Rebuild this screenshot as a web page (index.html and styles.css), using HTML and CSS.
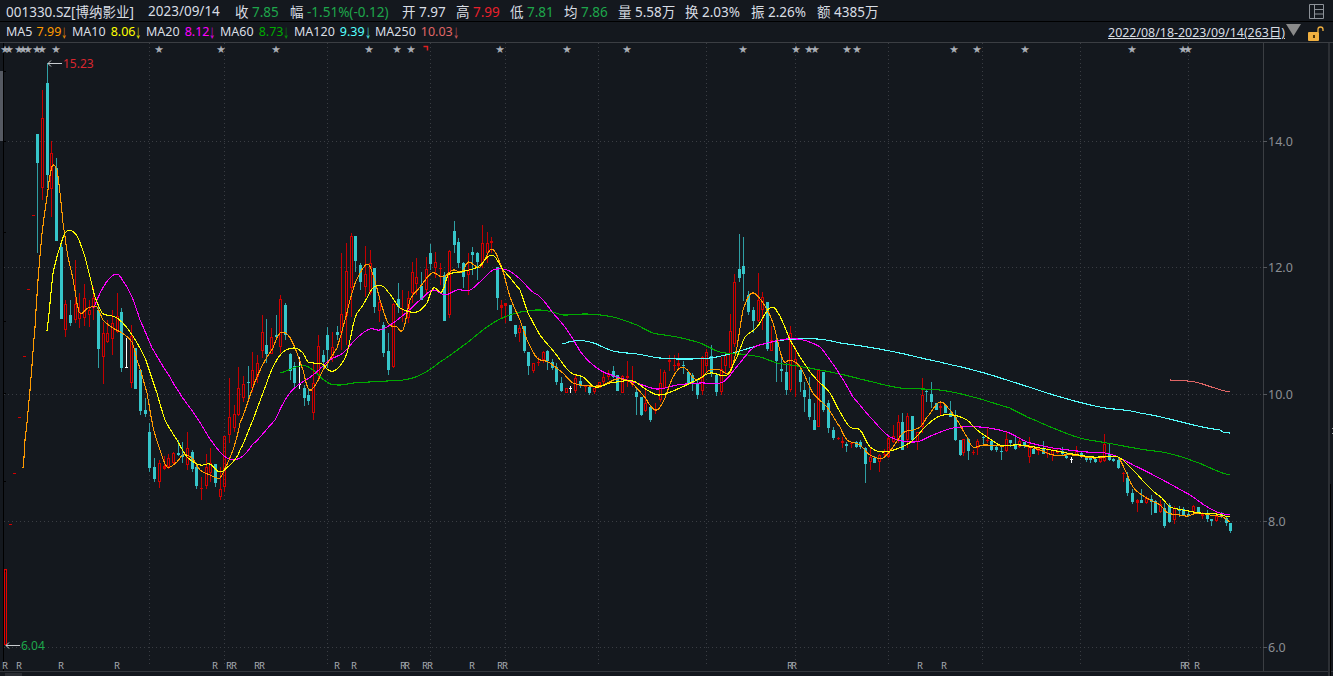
FILE: index.html
```html
<!DOCTYPE html>
<html lang="zh">
<head>
<meta charset="utf-8">
<title>001330.SZ</title>
<link rel="stylesheet" href="styles.css">
</head>
<body>
<div class="app">
  <header class="quote">
    <span class="name">001330.SZ[博纳影业]</span>
    <span class="date">2023/09/14</span>
    <span class="q q1">收 <b class="dn">7.85</b></span>
    <span class="q q2">幅 <b class="dn">-1.51%(-0.12)</b></span>
    <span class="q q3">开 <b>7.97</b></span>
    <span class="q q3">高 <b class="up">7.99</b></span>
    <span class="q q3">低 <b class="dn">7.81</b></span>
    <span class="q q3">均 <b class="dn">7.86</b></span>
    <span class="q q4">量 <b>5.58万</b></span>
    <span class="q q5">换 <b>2.03%</b></span>
    <span class="q q5">振 <b>2.26%</b></span>
    <span class="q">额 <b>4385万</b></span>
    <svg class="layout-icon" width="15" height="15" viewBox="0 0 15 15"><path d="M.5.5h14v14H.5zM5.500.5v14M5.500 5.500h9M5.500 10h9" fill="none" stroke="#8d9299"/></svg>
  </header>
  <div class="ma-row">
    <span class="ma m5">MA5<b>7.99<i>↓</i></b></span>
    <span class="ma m10">MA10<b>8.06<i>↓</i></b></span>
    <span class="ma m20">MA20<b>8.12<i>↓</i></b></span>
    <span class="ma m60">MA60<b>8.73<i>↓</i></b></span>
    <span class="ma m120">MA120<b>9.39<i>↓</i></b></span>
    <span class="ma m250">MA250<b>10.03<i>↓</i></b></span>
    <span class="range">2022/08/18-2023/09/14(263日)</span>
    <svg class="tri" width="15" height="12" viewBox="0 0 15 12"><path d="M0 0h15L7.500 12z" fill="#8a8a8a"/></svg>
    <svg class="lock" width="16" height="15" viewBox="0 0 16 15"><path d="M10 6V3.500a2.500 2.500 0 0 1 5 0V5" fill="none" stroke="#f0b040" stroke-width="1.300"/><rect x="0" y="6" width="11" height="9" rx="1" fill="#f0b040"/><rect x="5" y="9" width="2" height="3" fill="#4a3208"/></svg>
  </div>
  <main class="chart-wrap">
    <svg id="chart" class="chart" width="1333" height="633" viewBox="0 43 1333 633"></svg>
  </main>
</div>
<script src="chart.js"></script>
</body>
</html>
```
FILE: styles.css
```css
* { box-sizing: border-box; }
html, body { margin: 0; height: 100%; background: #14181e; overflow: hidden; }
body { font-family: "Noto Sans", "Noto Sans CJK SC", sans-serif; color: #d9dee4; }
.app { width: 1333px; height: 676px; display: flex; flex-direction: column; }
b { font-weight: 400; }
i { font-style: normal; }

.quote {
  height: 22px;
  flex: none;
  display: flex;
  align-items: center;
  padding: 0 9px 0 6px;
  font-size: 13.5px;
  white-space: nowrap;
  border-bottom: 1px solid #000;
}
.name { width: 142px; }
.date { width: 87px; }
.q { width: 54px; }
.q1 { width: 55px; }
.q2 { width: 112px; }
.q4 { width: 67px; }
.q5 { width: 66px; }
.up { color: #e8202c; }
.dn { color: #1ea64b; }
.layout-icon { margin-left: auto; margin-top: 1px; }

.ma-row {
  height: 21px;
  flex: none;
  display: flex;
  align-items: center;
  padding: 0 9px 0 6px;
  font-size: 12.5px;
  white-space: nowrap;
  border-bottom: 1px solid #3b3e43;
}
.ma { display: flex; gap: 5px; }
.ma b { display: flex; }
.ma i { display: block; width: 12.5px; margin-right: -6px; transform: scaleX(.5); transform-origin: left center; }
.m5 { width: 66px; gap: 4px; }
.m10, .m20, .m60 { width: 74px; }
.m120 { width: 81px; }
.m250 { width: 90px; }
.m5 b { color: #ff9a00; }
.m10 b { color: #ffff00; }
.m20 b { color: #ff00ff; }
.m60 b { color: #00aa00; }
.m120 b { color: #55ffff; }
.m250 b { color: #e06666; }
.range { margin-left: auto; text-decoration: underline; font-size: 12.4px; }
.tri { margin-left: 1px; margin-top: -4px; }
.lock { margin-left: 7px; margin-top: 2px; }

.chart-wrap { flex: 1; min-height: 0; }
.chart { display: block; }
.axis-label { font-size: 12.5px; fill: #8b8e93; }
.mark { font-size: 8.5px; fill: #a9aeb6; }
.rmark { font-size: 9.5px; fill: #a9aeb6; }
.hi-label { font-size: 12px; fill: #d8262f; }
.lo-label { font-size: 12px; fill: #1ea64b; }
```
FILE: chart.js
```js
(function () {
  var svg = document.getElementById('chart');
  var out = [];
  function rect(x, y, w, h, fill) {
    out.push('<rect x="' + x + '" y="' + y + '" width="' + w + '" height="' + h + '" fill="' + fill + '"/>');
  }
  function text(x, y, cls, t, anchor) {
    out.push('<text x="' + x + '" y="' + y + '" class="' + cls + '"' + (anchor ? ' text-anchor="middle"' : '') + '>' + t + '</text>');
  }

  /* grid */
  var G = '#3a3d43';
  [141, 267, 394, 521, 647].forEach(function (y) {
    out.push('<path d="M4 ' + (y + .5) + 'H1263" stroke="' + G + '" stroke-dasharray="1 3" shape-rendering="crispEdges"/>');
  });
  [149, 224, 327, 430, 505, 598, 706, 795, 888, 982, 1080, 1188].forEach(function (x) {
    out.push('<path d="M' + (x + .5) + ' 43V665" stroke="' + G + '" stroke-dasharray="1 3" shape-rendering="crispEdges"/>');
  });

  /* frame */
  rect(1263, 43, 1, 628, '#3b3e43');
  rect(0, 671, 1333, 1, '#33363b');
  rect(3, 43, 1, 628, '#000');
  rect(0, 71, 3, 70, '#555962');
  rect(5, 673, 17, 3, '#2a2d33');
  rect(1328, 43, 2, 633, '#2c2f34');
  rect(1330, 484, 1, 192, '#000');
  rect(1332, 428, 1, 1, '#9a9da2');
  rect(1332, 433, 1, 1, '#9a9da2');
  [71, 141, 232, 321, 393, 481, 571].forEach(function (y) { rect(3, y, 3, 1, '#000'); });
  [141, 267, 394, 521, 647].forEach(function (y) { rect(1263, y, 4, 1, '#55585d'); });

  /* candles: [x, kind, top, bottom, high, low]; kind 0 cyan, 1 red, 2 white */
  var px = [
    [10,1,524,525,524,525],[14,1,473,474,473,474],[19,1,417,418,417,418],[24,1,356,357,356,357],[28,1,289,290,289,290],[33,1,215,216,215,216],
    [37,0,134,163,134,253],[42,1,118,188,90,200],[47,0,83,175,63,188],[51,1,153,189,141,217],[56,0,168,241,158,241],[61,0,247,319,240,319],
    [65,1,304,330,300,337],[70,0,315,323,300,326],[75,1,304,320,260,323],[79,1,312,319,293,328],[84,1,298,318,284,326],[89,1,310,315,300,327],
    [93,1,298,308,287,320],[98,0,310,349,307,368],[103,1,333,357,322,384],[107,1,333,342,320,343],[112,1,323,339,310,355],[117,1,316,332,293,333],
    [121,0,312,368,308,372],[126,2,367,367,338,368],[131,1,336,383,325,388],[135,0,348,389,348,389],[140,0,370,411,370,415],[145,0,410,414,398,417],
    [149,0,432,468,423,472],[154,0,467,479,458,482],[159,1,463,482,460,488],[164,1,466,469,456,470],[168,1,458,467,454,469],[173,1,453,463,452,464],
    [178,0,453,455,440,456],[182,0,455,457,442,463],[187,1,448,465,432,470],[192,0,452,469,450,472],[196,0,467,486,465,489],[201,1,488,489,477,500],
    [206,1,467,486,454,489],[210,1,463,473,448,482],[215,0,464,483,464,487],[220,1,489,497,467,500],[224,1,436,487,436,492],[229,1,417,435,378,443],
    [234,1,414,428,405,432],[238,1,388,415,367,416]
  ];
  var z6 = [[10,1,492,533,468,545],[25,0,485,489,437,535],[37,1,450,505,397,515],[52,1,430,472,405,490],[67,1,337,392,285,415],[79,0,375,402,297,430],[94,1,352,402,325,402],[109,0,346,350,285,360],[121,1,238,382,225,400],[136,0,255,345,250,360],[150,0,402,452,400,480],[163,0,437,488,425,508],[178,2,493,493,410,508],[193,0,505,533,495,558],[205,0,525,542,507,555],[220,1,490,578,430,600],[235,1,377,465,345,480],[250,0,405,425,390,445],[262,0,345,390,320,445],[277,1,382,415,335,425],[292,0,335,345,318,360],[304,1,283,338,100,390],[319,1,153,288,68,375],[334,1,48,205,40,290],[346,0,48,123,48,155],[361,0,135,185,130,210],[376,1,163,202,78,230],[389,1,128,218,90,225],[403,0,145,262,143,280],[418,1,247,272,225,305],[430,0,315,400,307,410],[445,0,392,450,340,465],[460,1,253,440,250,445],[473,0,237,262,190,280],[487,1,267,270,210,305],[503,1,235,295,212,310],[515,1,155,218,127,250],[529,1,172,192,113,225],[543,0,198,240,155,240],[557,1,148,210,110,220],[571,0,98,132,72,150],[585,1,127,143,95,175],[599,1,143,146,130,195],[613,0,165,302,155,302],[627,1,92,285,90,295],[641,0,33,75,3,100],[655,0,67,128,55,145],[669,0,130,172,125,205],[685,1,150,165,100,225],[697,0,95,105,80,165],[712,0,98,125,95,180],[727,1,70,130,15,145],[740,1,70,100,37,130],[754,1,63,70,52,100],[770,0,140,235,140,270],[782,1,255,265,240,295],[796,1,250,257,250,310],[811,0,255,303,255,303],[824,0,315,342,315,350],[838,1,325,338,315,365]];
  var z9 = [[13,0,318,393,318,398],[25,0,395,437,395,465],[40,1,430,453,430,460],[55,1,425,428,410,437],[68,1,395,420,393,430],[82,0,393,423,390,450],[97,0,425,443,418,450],[109,0,440,485,430,495],[124,0,488,513,470,515],[138,1,503,520,503,520],[151,2,503,503,497,520],[166,1,475,513,465,520],[181,0,483,497,472,505],[194,1,499,502,497,515],[208,0,500,520,500,525],[223,1,505,515,503,522],[236,1,487,503,485,505],[250,1,472,485,460,495],[265,1,460,470,450,480],[278,0,453,470,438,475],[292,0,465,513,465,513],[307,1,467,520,465,520],[321,1,467,473,423,500],[335,1,490,495,437,500],[349,0,517,530,505,585],[364,0,532,585,530,588],[376,1,550,572,510,575],[391,0,562,600,562,605],[405,1,567,573,550,583],[419,1,488,540,447,545],[433,1,457,503,450,508],[448,1,420,427,405,452],[461,1,435,439,405,452],[475,1,430,438,400,450],[490,0,436,439,423,463],[503,0,455,490,455,492],[517,0,465,490,460,513],[532,0,490,525,480,537],[545,1,412,513,408,525],[559,1,397,437,387,460],[574,0,408,460,375,470],[587,0,465,515,465,527],[602,1,447,515,410,525],[615,1,405,438,400,458],[629,1,333,445,283,450],[643,1,187,372,162,380],[658,0,148,173,42,185],[670,0,138,162,52,242],[685,0,225,275,213,285],[700,0,270,303,260,340],[713,1,240,302,160,305],[727,1,230,270,217,330],[742,0,247,388,247,392],[754,1,360,392,318,392],[769,0,362,422,343,485],[784,0,447,453,405,485],[799,0,455,510,430,525],[811,1,340,510,318,517],[826,1,418,430,380,530],[841,0,450,487,445,515],[853,0,510,530,485,575],[868,0,537,590,470,600],[883,0,600,630,550,630],[895,1,450,620,450,620],[910,0,455,570,455,575],[925,0,548,625,540,640],[938,0,630,655,620,660],[953,1,655,658,650,660]];
  var z10 = [[7,1,333,338,320,353],[19,0,343,348,335,365],[33,1,339,342,335,353],[47,0,335,352,332,355],[60,0,337,352,330,358],[75,0,353,402,350,458],[90,1,382,395,355,420],[103,0,385,400,378,400],[117,1,375,395,372,425],[132,1,371,374,358,385],[145,1,325,380,315,385],[160,1,318,335,285,340],[175,1,275,330,255,340],[187,0,277,360,250,360],[202,1,258,330,250,355],[217,0,258,330,258,335],[230,1,305,335,305,360],[245,1,195,290,145,310],[259,0,184,187,180,217],[274,0,192,217,155,235],[287,0,218,240,218,240],[301,1,228,235,215,258],[316,0,225,250,225,250],[329,0,250,262,213,262],[344,0,262,330,240,332],[359,0,330,375,330,378],[370,1,327,370,327,378],[385,0,327,362,325,390],[400,1,367,370,360,375],[412,1,332,355,327,375],[428,0,320,323,318,345],[442,1,329,332,293,340],[454,0,332,360,330,362],[468,0,350,360,345,365],[484,0,364,367,350,390],[497,1,328,362,305,365],[511,0,330,340,330,350],[525,0,345,357,322,360],[538,1,332,352,322,355],[553,0,335,345,335,355],[568,1,350,380,320,400],[580,0,358,372,355,372],[595,1,355,362,350,375],[610,0,355,372,332,372],[622,1,369,372,352,385],[637,1,360,375,350,392],[650,1,362,368,355,372],[665,0,362,372,350,375],[679,0,378,385,370,388],[694,2,386,386,382,398],[708,1,362,378,347,378],[722,0,368,382,365,385],[737,0,382,390,378,395],[750,0,385,390,378,398],[765,0,388,397,385,398],[779,1,385,395,378,398],[793,1,342,392,312,395],[806,0,372,390,340,392],[820,0,388,393,385,395],[835,0,390,413,385,418]];
  var z8 = [[68,1,129,132,125,155],[82,0,143,190,125,197],[97,0,188,215,178,222],[110,1,210,220,207,245],[124,0,210,218,178,220],[139,1,205,220,197,222],[152,0,208,215,195,255],[166,0,212,248,210,250],[181,1,222,245,210,250],[193,0,235,288,220,293],[208,0,225,275,220,278],[223,1,235,270,228,282],[236,0,239,242,228,262],[250,0,237,255,232,258],[265,0,251,254,240,262],[278,1,228,245,225,250],[293,0,232,252,232,252],[307,1,252,258,245,268],[320,0,252,268,240,275],[334,0,268,272,268,288],[349,1,258,272,245,275],[362,0,252,262,245,265],[377,0,265,278,258,287],[391,0,278,303,278,308]];

  function candle(c) {
    var x = Math.round(c[0]), k = c[1], t = Math.round(c[2]), b = Math.round(c[3]), h = Math.round(c[4]), l = Math.round(c[5]);
    if (k === 2) {
      rect(x, h, 1, Math.max(1, l - h), '#ffffff');
      rect(x - 1, t, 3, 1, '#ffffff');
      return;
    }
    var wick = k ? '#c40000' : '#2f9fa4', body = k ? '#d20000' : '#36c6ca';
    if (h < t) rect(x, h, 1, t - h, wick);
    if (l > b) rect(x, b, 1, l - b, wick);
    var H = Math.max(1, b - t);
    if (k && H > 3) {
      rect(x - 1, t, 3, 1, body); rect(x - 1, t + H - 1, 3, 1, body);
      rect(x - 1, t, 1, H, body); rect(x + 1, t, 1, H, body);
    } else {
      rect(x - 1, t, 3, H, body);
    }
  }
  function group(list, ox, oy) {
    list.forEach(function (c) {
      candle([ox + c[0] / 3, c[1], oy + c[2] / 3, oy + c[3] / 3, oy + c[4] / 3, oy + c[5] / 3]);
    });
  }
  rect(4, 569, 1, 76, '#e60000'); rect(6, 569, 1, 76, '#e60000');
  rect(4, 569, 3, 1, '#e60000'); rect(4, 644, 3, 1, '#e60000');
  px.forEach(candle);
  group(z6, 240, 220);
  group(z9, 520, 220);
  group(z10, 840, 330);
  group(z8, 1100, 430);

  /* moving averages: pixel control points */
  var ma5 = [[23,468],[25,440],[30,390],[35,327],[38,280],[42,233],[47,197],[51.6,167],[57,170],[60,193],[63,223],[68,257],[73,279],[79,312],[88,308],[97,307],[103,320],[113,328],[122,333],[132,342],[137,360],[147,393],[153,427],[160,450],[167,467],[177,462],[183,455],[192,458],[200,470],[210,475],[220,478],[225,468],[233,450],[240,423],[257,377],[273,348],[280,333],[288,335],[295,348],[303,370],[308,388],[313,388],[323,370],[337,348],[343,327],[353,290],[360,273],[368,264],[373,275],[380,300],[388,323],[397,327],[403,330],[410,300],[420,287],[432,273],[443,277],[453,270],[462,272],[468,262],[480,267],[492,249],[502,268],[510,297],[520,320],[527,340],[537,358],[548,362],[563,373],[573,383],[590,386],[603,385],[617,379],[630,382],[643,395],[655,410],[663,402],[673,377],[683,367],[697,380],[710,370],[720,370],[730,373],[737,347],[743,310],[752,293],[763,303],[773,323],[783,360],[790,360],[800,367],[813,393],[827,407],[840,427],[847,440],[860,445],[870,455],[883,458],[893,447],[903,433],[913,430],[920,427],[927,417],[940,402],[950,410],[957,420],[967,437],[973,447],[983,445],[1003,446],[1020,445],[1040,450],[1053,455],[1073,455],[1093,458],[1118,457],[1125,470],[1133,487],[1142,495],[1150,500],[1160,505],[1168,513],[1180,515],[1188,516],[1197,513],[1210,515],[1223,517],[1230,522]];
  var ma10 = [[47,331],[50,303],[53,273],[58,253],[65,233],[72,231],[78,238],[85,257],[90,277],[95,297],[102,313],[117,318],[130,332],[145,358],[157,393],[165,420],[177,440],[187,457],[200,465],[210,464],[220,472],[233,462],[240,450],[253,420],[263,393],[273,367],[283,352],[295,348],[303,353],[308,362],[322,364],[330,371],[338,368],[347,353],[355,318],[363,305],[373,288],[382,286],[388,292],[400,308],[417,312],[427,303],[433,288],[442,292],[448,275],[460,272],[478,267],[492,255],[503,270],[520,290],[528,313],[540,335],[555,353],[570,372],[583,377],[595,387],[610,383],[633,381],[647,390],[660,395],[680,388],[697,380],[710,373],[727,375],[737,357],[745,337],[757,327],[770,308],[778,313],[790,340],[807,367],[817,380],[830,393],[840,412],[850,427],[860,430],[870,447],[883,452],[902,447],[913,440],[927,425],[940,416],[953,415],[967,420],[977,430],[987,437],[1000,445],[1020,445],[1040,448],[1067,453],[1093,457],[1118,457],[1133,470],[1150,488],[1162,498],[1170,507],[1183,510],[1200,513],[1217,514],[1230,517]];
  var ma20 = [[93,308],[100,293],[108,280],[117,274],[123,281],[132,297],[140,320],[152,348],[170,377],[182,397],[197,418],[213,443],[227,458],[240,458],[252,445],[275,420],[287,397],[298,385],[313,375],[330,360],[343,353],[357,338],[370,329],[380,330],[393,323],[407,312],[420,300],[433,290],[445,295],[457,290],[470,290],[482,280],[493,270],[507,270],[520,279],[533,292],[540,297],[553,313],[567,330],[583,355],[600,370],[617,377],[637,383],[657,389],[677,385],[700,383],[723,382],[740,363],[753,348],[767,343],[787,339],[803,340],[820,347],[830,360],[840,375],[853,397],[873,420],[890,437],[915,442],[933,435],[953,428],[980,427],[1007,432],[1027,442],[1053,448],[1087,452],[1110,454],[1133,465],[1163,480],[1190,495],[1213,510],[1230,515]];
  var ma60 = [[280,373],[300,366],[310,368],[327,382],[338,385],[353,383],[387,381],[403,380],[420,375],[440,362],[467,343],[490,325],[510,315],[527,311],[540,310],[553,312],[563,315],[587,314],[613,317],[637,325],[653,333],[677,337],[700,343],[720,352],[740,354],[760,357],[777,363],[803,367],[840,374],[873,382],[900,388],[940,390],[973,397],[1010,408],[1027,417],[1053,428],[1080,438],[1107,443],[1140,449],[1167,453],[1193,461],[1230,475]];
  var ma120 = [[562,344],[573,341],[590,342],[613,351],[637,354],[660,358],[683,359],[710,358],[733,353],[760,345],[783,340],[817,339],[840,343],[890,351],[940,362],[973,370],[1013,382],[1057,396],[1100,407],[1140,413],[1220,430],[1230,433]];
  var ma250 = [[1170,380],[1195,382],[1215,388],[1230,392]];

  function smooth(p) {
    var d = 'M' + p[0][0] + ' ' + p[0][1];
    for (var i = 0; i < p.length - 1; i++) {
      var a = p[Math.max(0, i - 1)], b = p[i], c = p[i + 1], e = p[Math.min(p.length - 1, i + 2)];
      var n = Math.max(2, Math.round((c[0] - b[0]) / 2));
      for (var s = 1; s <= n; s++) {
        var t = s / n, t2 = t * t, t3 = t2 * t;
        var x = b[0] + t * (c[0] - b[0]);
        var y = .5 * (2 * b[1] + (c[1] - a[1]) * t + (2 * a[1] - 5 * b[1] + 4 * c[1] - e[1]) * t2 + (3 * b[1] - a[1] - 3 * c[1] + e[1]) * t3);
        d += 'L' + x.toFixed(1) + ' ' + y.toFixed(1);
      }
    }
    return d;
  }
  [[ma250, '#e06666'], [ma120, '#55ffff'], [ma60, '#00aa00'], [ma20, '#ff00ff'], [ma5, '#ff9a00'], [ma10, '#ffff00']].forEach(function (m) {
    out.push('<path d="' + smooth(m[0]) + '" fill="none" stroke="' + m[1] + '" stroke-width="1.1" shape-rendering="crispEdges"/>');
  });

  /* axis labels */
  [['14.0', 141], ['12.0', 267], ['10.0', 394], ['8.0', 521], ['6.0', 647]].forEach(function (a) {
    text(1268, a[1] + 5, 'axis-label', a[0]);
  });

  /* high / low callouts */
  out.push('<path d="M62 63.500H48M51 60.500L48 63.500L51 66.500M20 645.500H6M9 642.500L6 645.500L9 648.500" fill="none" stroke="#c8ccd0"/>');
  text(63, 68, 'hi-label', '15.23');
  text(21, 650, 'lo-label', '6.04');

  /* event markers: adjacent marks share one text run, one x per glyph */
  function runs(list, y, cls, ch, maxGap) {
    var cur = [];
    function flush() {
      if (!cur.length) return;
      text(cur.join(' '), y, cls, new Array(cur.length + 1).join(ch), true);
      cur = [];
    }
    list.forEach(function (x) {
      if (cur.length && x - cur[cur.length - 1] > maxGap) flush();
      cur.push(x);
    });
    flush();
  }
  runs([5,9,19,23,28,37,42,56,159,221,276,369,397,411,500,567,627,743,796,809,815,847,857,954,977,1025,1132,1183,1188], 52, 'mark', '★', 6);
  out.push('<path d="M423.500 46.500H427.500V50.500" fill="none" stroke="#e02020" stroke-width="1.500"/>');
  runs([5,19,61,117,215,229,234,257,262,337,354,403,407,425,430,472,500,505,790,794,920,944,1183,1187,1197], 669, 'rmark', 'R', 6);

  svg.innerHTML = out.join('');
})();
```
